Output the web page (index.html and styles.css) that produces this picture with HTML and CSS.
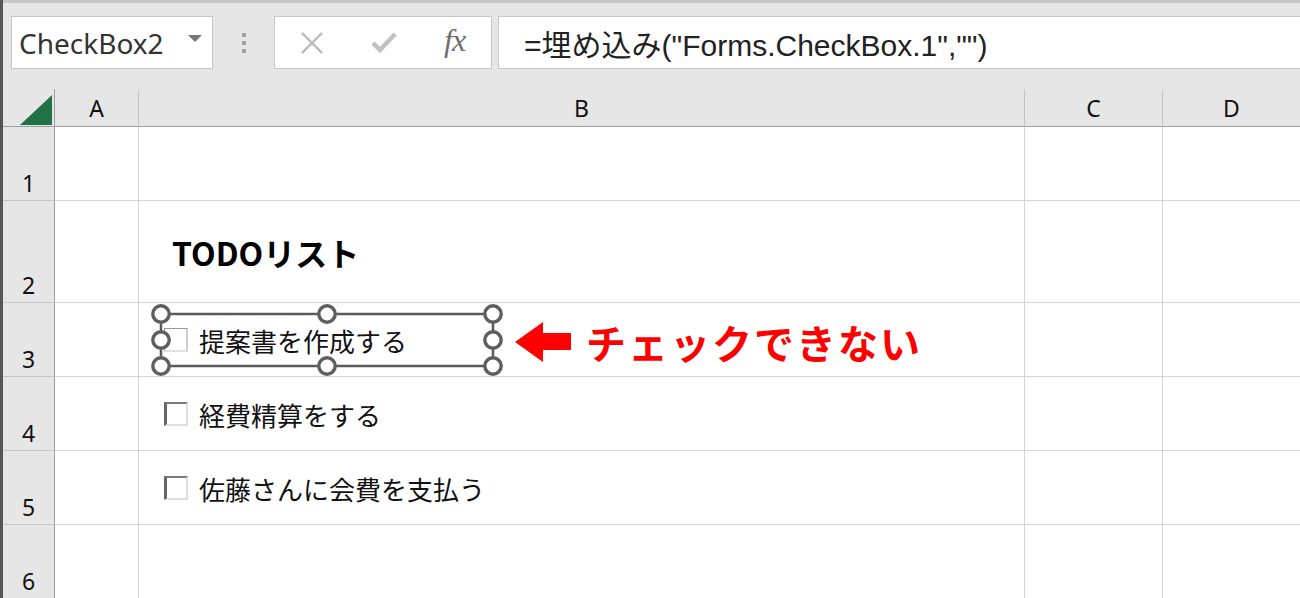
FILE: index.html
```html
<!DOCTYPE html>
<html lang="ja">
	<head>
		<meta charset="UTF-8">
		<title>TODOリスト - Excel</title>
		<link rel="stylesheet" href="styles.css">
	</head>
	<body>
		<div class="app">

			<!-- name box / formula bar -->
			<div class="formula-bar">
				<div class="name-box">
					<span class="name">CheckBox2</span>
					<span class="caret"></span>
				</div>
				<div class="grip"><i></i><i></i><i></i></div>
				<div class="fn-box">
					<svg class="fn-icon" width="24" height="22" viewBox="0 0 24 22">
						<path d="M2 1 L22 21 M22 1 L2 21" stroke="#b9b9b9" stroke-width="2.4" fill="none"/>
					</svg>
					<svg class="fn-icon" width="26" height="22" viewBox="0 0 26 22">
						<path d="M2 11 L9 18 L24 2" stroke="#c2c2c2" stroke-width="4.5" fill="none"/>
					</svg>
					<span class="fx">fx</span>
				</div>
				<div class="formula">=埋め込み("Forms.CheckBox.1","")</div>
			</div>

			<!-- worksheet -->
			<div class="sheet">
				<div class="corner">
					<svg width="32" height="30" viewBox="0 0 32 30"><polygon points="32,0 32,30 0,30" fill="#217346"/></svg>
				</div>
				<div class="col-head">A</div>
				<div class="col-head">B</div>
				<div class="col-head">C</div>
				<div class="col-head">D</div>

				<div class="row-head">1</div>
				<div class="cell"></div>
				<div class="cell"></div>
				<div class="cell"></div>
				<div class="cell"></div>

				<div class="row-head">2</div>
				<div class="cell"></div>
				<div class="cell title-cell"><span class="title">TODOリスト</span></div>
				<div class="cell"></div>
				<div class="cell"></div>

				<div class="row-head">3</div>
				<div class="cell"></div>
				<div class="cell item-cell selected">
					<span class="cb cb-edit"></span>
					<span class="label">提案書を作成する</span>
					<svg class="handles" width="380" height="73" viewBox="0 0 380 73">
						<rect x="22" y="11" width="332" height="52" fill="none" stroke="#5a5a5a" stroke-width="2.5"/>
						<g fill="#fff" stroke="#5e5e5e" stroke-width="3.4">
							<circle cx="22" cy="11" r="8.2"/>
							<circle cx="188" cy="11" r="8.2"/>
							<circle cx="354" cy="11" r="8.2"/>
							<circle cx="22" cy="37" r="8.2"/>
							<circle cx="354" cy="37" r="8.2"/>
							<circle cx="22" cy="63" r="8.2"/>
							<circle cx="188" cy="63" r="8.2"/>
							<circle cx="354" cy="63" r="8.2"/>
						</g>
					</svg>
					<div class="callout">
						<svg width="56" height="40" viewBox="0 0 56 40">
							<polygon points="0,20 28,0 28,11 56,11 56,28 28,28 28,40" fill="#ff0000"/>
						</svg>
						<span class="callout-text">チェックできない</span>
					</div>
				</div>
				<div class="cell"></div>
				<div class="cell"></div>

				<div class="row-head">4</div>
				<div class="cell"></div>
				<div class="cell item-cell">
					<span class="cb"></span>
					<span class="label">経費精算をする</span>
				</div>
				<div class="cell"></div>
				<div class="cell"></div>

				<div class="row-head">5</div>
				<div class="cell"></div>
				<div class="cell item-cell">
					<span class="cb"></span>
					<span class="label">佐藤さんに会費を支払う</span>
				</div>
				<div class="cell"></div>
				<div class="cell"></div>

				<div class="row-head">6</div>
				<div class="cell"></div>
				<div class="cell"></div>
				<div class="cell"></div>
				<div class="cell"></div>
			</div>

		</div>
	</body>
</html>
```

FILE: styles.css
```css
body {
	margin: 0;
	background-color: #e6e6e6;
	font-family: "Noto Sans", "Noto Sans CJK JP", sans-serif;
	overflow: hidden;
}
.app {
	width: 1297px;
	height: 598px;
	border-left: 3px solid #555555;
	overflow: hidden;
}

/* formula bar */
.formula-bar {
	height: 73px;
	border-top: 3px solid #c6c6c6;
	padding: 13px 0 0 8px;
	display: flex;
	align-items: flex-start;
}
.name-box {
	width: 202px;
	height: 53px;
	background-color: white;
	border: 1px solid #c6c6c6;
	display: flex;
	align-items: center;
	justify-content: space-between;
	padding: 0 10px 0 7px;
	box-sizing: border-box;
}
.name {
	font-family: "Noto Sans", sans-serif;
	font-size: 28px;
	color: #333333;
	line-height: 1;
}
.caret {
	width: 0;
	height: 0;
	border-left: 7px solid transparent;
	border-right: 7px solid transparent;
	border-top: 7px solid #777777;
	margin-top: -8px;
}
.grip {
	width: 61px;
	height: 53px;
	display: flex;
	flex-direction: column;
	align-items: center;
	justify-content: center;
	gap: 4px;
}
.grip i {
	display: block;
	width: 4px;
	height: 4px;
	background-color: #a0a0a0;
}
.fn-box {
	width: 218px;
	height: 53px;
	background-color: white;
	border: 1px solid #c6c6c6;
	box-sizing: border-box;
	display: flex;
	align-items: center;
	padding-left: 25px;
	margin-right: 6px;
}
.fn-icon {
	margin-right: 47px;
}
.fx {
	font-family: "Liberation Serif", serif;
	font-style: italic;
	font-size: 32px;
	color: #6e6e6e;
	margin-top: -4px;
	letter-spacing: -1px;
}
.formula {
	flex: 1;
	height: 53px;
	background-color: white;
	border: 1px solid #c6c6c6;
	border-right: none;
	box-sizing: border-box;
	padding-left: 25px;
	display: flex;
	align-items: center;
	font-family: "Liberation Sans", "Noto Sans CJK JP", sans-serif;
	font-size: 30px;
	color: #222222;
}

/* worksheet grid */
.sheet {
	display: grid;
	grid-template-columns: 52px 84px 886px 138px 138px;
	grid-template-rows: 38px 74px 102px 74px 74px 74px 74px;
	background-color: white;
}
.corner,
.col-head,
.row-head {
	background-color: #e6e6e6;
	box-sizing: border-box;
	font-family: "Noto Sans", sans-serif;
	font-size: 23px;
	color: #111111;
}
.corner {
	border-right: 1px solid #9e9e9e;
	border-bottom: 1px solid #9e9e9e;
	display: flex;
	justify-content: flex-end;
	align-items: flex-end;
	padding: 0 2px 1px 0;
}
.col-head {
	border-bottom: 1px solid #9e9e9e;
	border-right: 1px solid #c4c4c4;
	border-top: 1px solid #e6e6e6;
	display: flex;
	align-items: center;
	justify-content: center;
}
.row-head {
	border-right: 1px solid #9e9e9e;
	border-bottom: 1px solid #c6c6c6;
	display: flex;
	align-items: flex-end;
	justify-content: center;
	padding-bottom: 2px;
	line-height: 1.2;
}
.cell {
	border-right: 1px solid #d4d4d4;
	border-bottom: 1px solid #d4d4d4;
	box-sizing: border-box;
	position: relative;
}

.title-cell {
	display: flex;
	align-items: flex-end;
	padding: 0 0 34px 33px;
}
.title {
	font-family: "Noto Sans CJK JP", sans-serif;
	font-weight: bold;
	font-size: 32px;
	line-height: 1;
	color: #000000;
}

.item-cell {
	display: flex;
	align-items: center;
	padding-left: 25px;
	gap: 11px;
}
.cb {
	width: 24px;
	height: 24px;
	box-sizing: border-box;
	background-color: white;
	border-top: 2px solid #7a7a7a;
	border-left: 3px solid #666666;
	border-right: 2px solid #dedede;
	border-bottom: 2px solid #dedede;
	margin-top: 1px;
}
.cb-edit {
	border-top: 1px solid #9a9a9a;
	border-left: 1px solid #9a9a9a;
	border-right: 2px solid #cfcfcf;
	border-bottom: 2px solid #e2e2e2;
}
.label {
	font-family: "Noto Sans CJK JP", sans-serif;
	font-size: 26px;
	line-height: 1;
	color: #111111;
	margin-top: 2px;
}

/* selection frame drawn over the embedded control */
.handles {
	position: absolute;
	left: 0;
	top: 0;
}
.callout {
	position: absolute;
	left: 376px;
	top: 19px;
	display: flex;
	align-items: center;
	gap: 15px;
}
.callout-text {
	font-family: "Noto Sans CJK JP", sans-serif;
	font-weight: bold;
	font-size: 40px;
	line-height: 1;
	color: #ff0000;
	letter-spacing: 2px;
}
```
